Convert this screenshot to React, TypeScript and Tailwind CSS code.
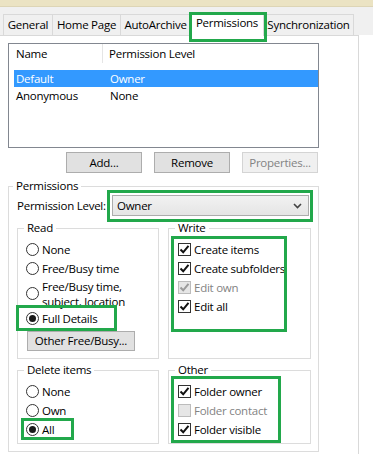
import React from 'react';

const GREEN = 'border-[3px] border-[#22a84b]';

function Radio({ checked }: { checked?: boolean }) {
  return (
    <span className="w-[13px] h-[13px] shrink-0 rounded-full border border-[#333] bg-white flex items-center justify-center">
      {checked && <span className="w-[7px] h-[7px] rounded-full bg-[#1a1a1a]" />}
    </span>
  );
}

function Check({ checked, disabled }: { checked?: boolean; disabled?: boolean }) {
  return (
    <span
      className={
        'w-[13px] h-[13px] shrink-0 border flex items-center justify-center ' +
        (disabled ? 'border-[#bcbcbc] bg-[#e6e6e6]' : 'border-[#333] bg-white')
      }
    >
      {checked && (
        <svg width="11" height="11" viewBox="0 0 11 11">
          <path
            d="M1.5 5.5 L4.2 8.3 L9.5 1.8"
            fill="none"
            stroke={disabled ? '#9a9a9a' : '#111'}
            strokeWidth="2"
          />
        </svg>
      )}
    </span>
  );
}

function RadioRow({ label, checked }: { label: React.ReactNode; checked?: boolean }) {
  return (
    <div className="h-[19px] flex items-center pl-[8px] gap-[3px]">
      <Radio checked={checked} />
      <span>{label}</span>
    </div>
  );
}

function CheckRow({ label, checked, disabled }: { label: string; checked?: boolean; disabled?: boolean }) {
  return (
    <div className="h-[19px] flex items-center pl-[9px] gap-[3px]">
      <Check checked={checked} disabled={disabled} />
      <span className={disabled ? 'text-[#838383]' : ''}>{label}</span>
    </div>
  );
}

function Group({ title, className, children }: { title: string; className: string; children: React.ReactNode }) {
  return (
    <fieldset className={'border border-[#dcdcdc] ' + className}>
      <legend className="ml-[6px] px-[3px] leading-[14px]">{title}</legend>
      {children}
    </fieldset>
  );
}

const tabs = [
  { name: 'General', w: 'w-[50px]' },
  { name: 'Home Page', w: 'w-[69px]' },
  { name: 'AutoArchive', w: 'w-[71px]' },
];

export default function App() {
  return (
    <div className="w-[373px] h-[454px] overflow-hidden bg-white text-[11.5px] text-black font-['Open_Sans','Noto_Sans',sans-serif] tracking-[-0.25px]">
      <div className="h-[7px] bg-[#ebe3c3] border-b border-[#ddd5b6]" />
      <div className="h-[28px] bg-[#f0f0f0] flex items-end pl-[3px]">
        {tabs.map((t) => (
          <div
            key={t.name}
            className={t.w + ' h-[21px] -mr-px border border-b-0 border-[#d9d9d9] bg-[#f0f0f0] flex items-center justify-center leading-none pb-[1px]'}
          >
            {t.name}
          </div>
        ))}
        <div className="relative w-[74px] h-[24px] -mb-px z-10 bg-white border border-b-0 border-[#d9d9d9] flex items-center justify-center pb-[4px]">
          Permissions
          <span className={'absolute -left-[2px] -right-[4px] -top-[1px] -bottom-[6px] ' + GREEN} />
        </div>
        <div className="w-[91px] h-[21px] -ml-px border border-b-0 border-[#d9d9d9] bg-[#f0f0f0] flex items-center justify-center pb-[1px]">
          Synchronization
        </div>
      </div>

      <div className="w-[359px] h-[420px] border-t border-r border-[#d9d9d9] pl-[8px] pt-[7px]">
        {/* list */}
        <div className="w-[311px] h-[105px] border border-[#828790] bg-white">
          <div className="h-[19px] flex">
            <div className="w-[94px] pl-[7px] border-r border-[#e5e5e5] flex items-center">Name</div>
            <div className="pl-[6px] flex items-center">Permission Level</div>
          </div>
          <div className="mt-[7px] ml-[5px]">
            <div className="h-[17px] flex items-center bg-[#3399ff] text-white">
              <span className="w-[96px] pl-[2px]">Default</span>
              <span>Owner</span>
            </div>
            <div className="h-[17px] flex items-center">
              <span className="w-[96px] pl-[2px]">Anonymous</span>
              <span>None</span>
            </div>
          </div>
        </div>

        {/* buttons */}
        <div className="w-[310px] mt-[4px] flex justify-end gap-[12px]">
          <button className="w-[76px] h-[21px] bg-[#e1e1e1] border border-[#adadad]">Add...</button>
          <button className="w-[76px] h-[21px] bg-[#e1e1e1] border border-[#adadad]">Remove</button>
          <button className="w-[76px] h-[21px] bg-[#f0f0f0] border border-[#d4d4d4] text-[#838383]">Properties...</button>
        </div>

        {/* permissions */}
        <fieldset className="mt-[6px] w-[311px] h-[273px] border border-[#dcdcdc]">
          <legend className="ml-[4px] px-[3px] leading-[14px]">Permissions</legend>
          <div className="mt-[2px] pl-[8px] flex items-center h-[21px]">
            <span className="w-[95px] whitespace-nowrap">Permission Level:</span>
            <div className="relative w-[197px] h-[21px]">
              <div className="h-full border border-[#acacac] bg-gradient-to-b from-[#f2f2f2] to-[#e5e5e5] flex items-center justify-between pl-[4px] pr-[6px]">
                <span>Owner</span>
                <svg width="9" height="6" viewBox="0 0 9 6">
                  <path d="M1 1 L4.5 4.5 L8 1" fill="none" stroke="#444" strokeWidth="1.6" />
                </svg>
              </div>
              <span className={'absolute -left-[5px] -right-[4px] -top-[5px] -bottom-[6px] ' + GREEN} />
            </div>
          </div>

          <div className="mt-[5px] ml-[8px] flex gap-[9px]">
            <Group title="Read" className="w-[142px] h-[138px]">
              <div className="pt-[5px]">
                <RadioRow label="None" />
                <RadioRow label="Free/Busy time" />
                <div className="h-[31px] flex items-center pl-[8px] gap-[3px]">
                  <Radio />
                  <span className="leading-[15px] pt-[1px]">
                    Free/Busy time,
                    <br />
                    subject, location
                  </span>
                </div>
                <div className="relative">
                  <RadioRow label="Full Details" checked />
                  <span className={'absolute left-[-2px] top-[-4px] w-[101px] h-[26px] ' + GREEN} />
                </div>
                <button className="mt-[3px] ml-[9px] w-[108px] h-[20px] bg-[#e1e1e1] border border-[#adadad]">
                  Other Free/Busy...
                </button>
              </div>
            </Group>
            <Group title="Write" className="w-[143px] h-[138px]">
              <div className="relative pt-[5px]">
                <CheckRow label="Create items" checked />
                <CheckRow label="Create subfolders" checked />
                <CheckRow label="Edit own" checked disabled />
                <CheckRow label="Edit all" checked />
                <span className={'absolute left-[2px] top-[1px] w-[116px] h-[96px] ' + GREEN} />
              </div>
            </Group>
          </div>

          <div className="mt-[4px] ml-[8px] flex gap-[9px]">
            <Group title="Delete items" className="w-[142px] h-[81px]">
              <div className="pt-[5px]">
                <RadioRow label="None" />
                <RadioRow label="Own" />
                <div className="relative">
                  <RadioRow label="All" checked />
                  <span className={'absolute left-[3px] top-[-2px] w-[53px] h-[22px] ' + GREEN} />
                </div>
              </div>
            </Group>
            <Group title="Other" className="w-[143px] h-[81px]">
              <div className="relative pt-[5px]">
                <CheckRow label="Folder owner" checked />
                <CheckRow label="Folder contact" disabled />
                <CheckRow label="Folder visible" checked />
                <span className={'absolute left-[2px] top-[-1px] w-[110px] h-[67px] ' + GREEN} />
              </div>
            </Group>
          </div>
        </fieldset>
      </div>
    </div>
  );
}
